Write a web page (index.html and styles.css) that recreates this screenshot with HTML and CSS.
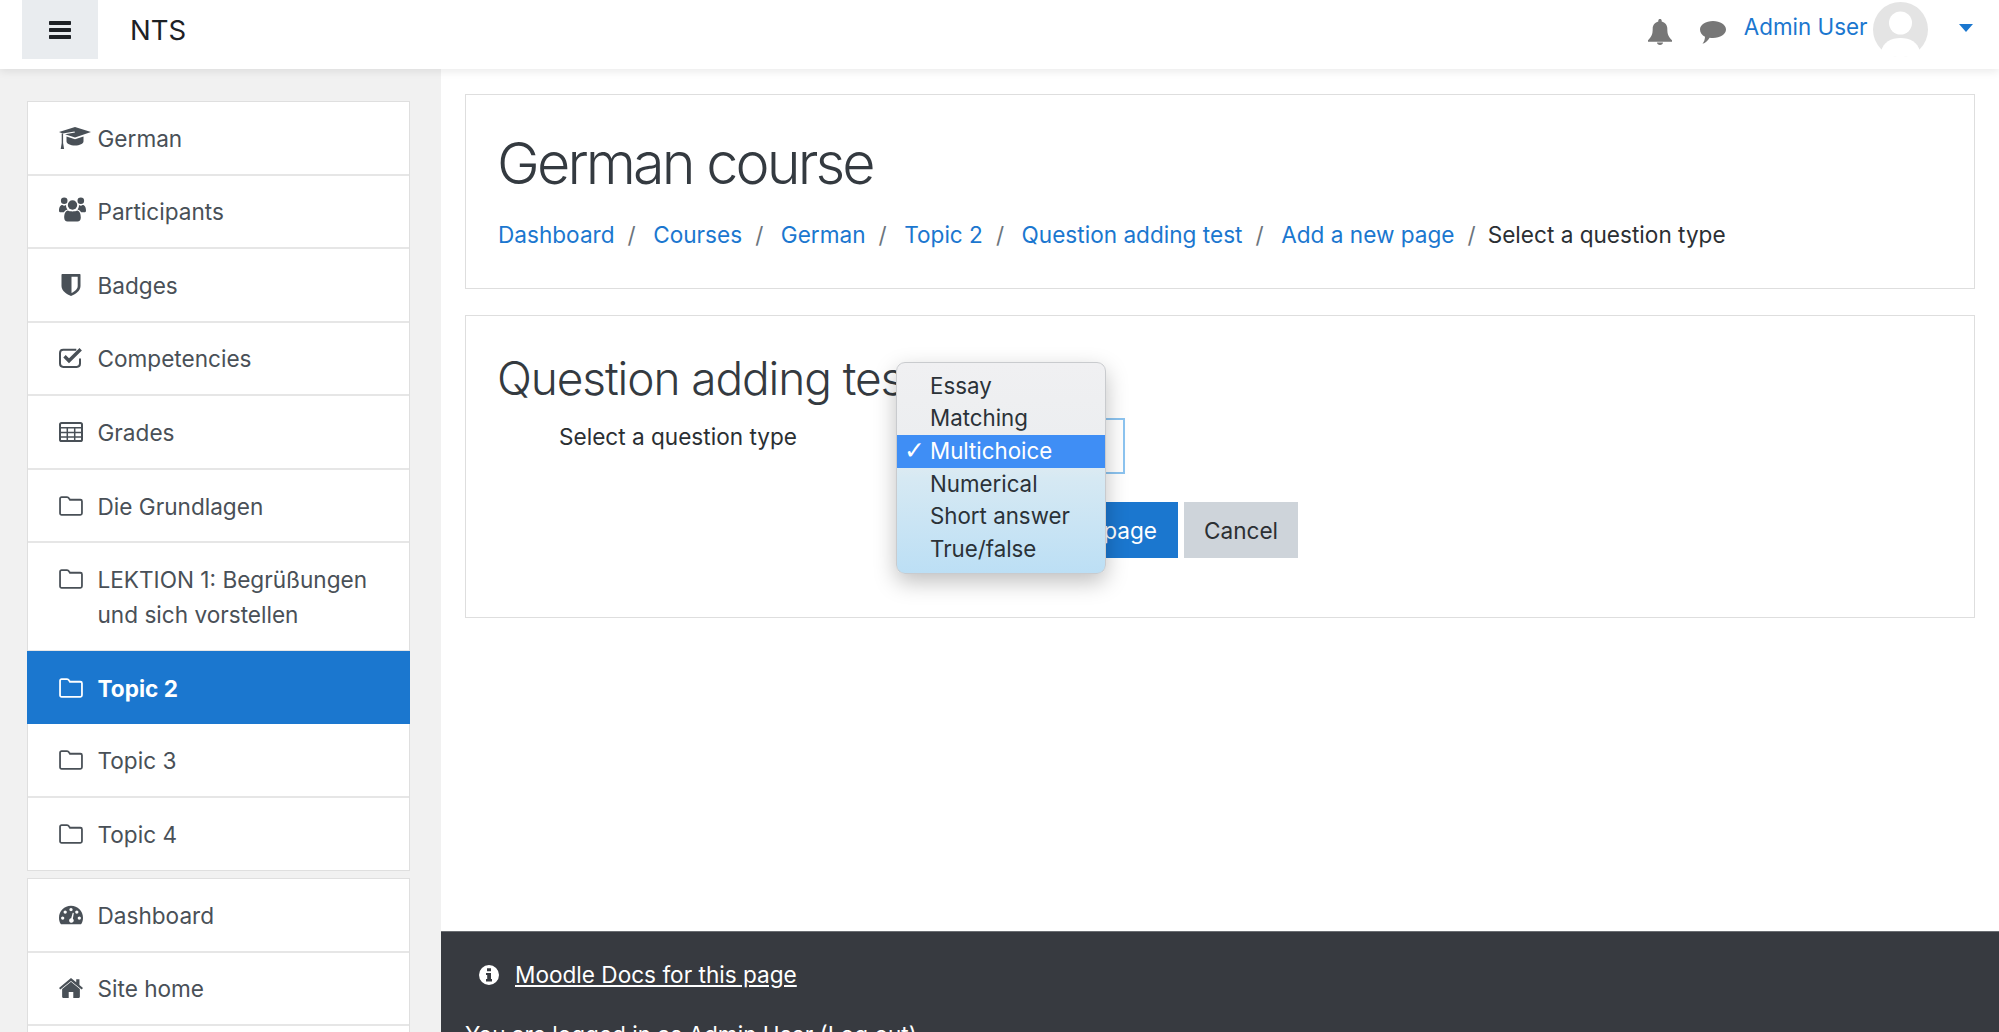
FILE: index.html
```html
<!DOCTYPE html>
<html lang="en">
<head>
<meta charset="utf-8">
<title>German course</title>
<link rel="stylesheet" href="styles.css">
</head>
<body>
<svg class="sprite" aria-hidden="true">
  <symbol id="i-folder" viewBox="0 0 23 19"><path d="M2.500 1h5.200c1 0 1.500.5 2 1.300l.8 1.200H20.500c.9 0 1.500.6 1.500 1.500V16.500c0 .9-.6 1.500-1.500 1.500H2.500C1.600 18 1 17.400 1 16.500V2.500C1 1.600 1.600 1 2.500 1Z" fill="none" stroke="currentColor" stroke-width="1.700"/></symbol>
  <symbol id="i-cap" viewBox="0 0 32 22"><path fill="currentColor" d="M16 0 32 5 16 10.500 6 7.200 16 5.500 15.500 4.500 3.700 6.500 0 5Z"/><path fill="currentColor" d="M7.500 9.500 16 12.300l8.500-2.800v4.700c0 2.500-3.800 4.300-8.500 4.300s-8.500-1.800-8.500-4.300Z"/><path fill="currentColor" d="M2.700 6.500h1.400v9.500l1 6H1.700l1-6Z"/></symbol>
  <symbol id="i-users" viewBox="0 0 27 25"><circle cx="5.200" cy="3.800" r="3.300" fill="currentColor"/><circle cx="21.800" cy="3.800" r="3.300" fill="currentColor"/><circle cx="13.500" cy="8" r="4.700" fill="currentColor"/><path fill="currentColor" d="M7 8c0 2 .7 3.500 1.500 4.500-1.700.5-2.900 1.500-3.700 2.800H1.800C.8 15.300 0 14.800 0 13.400 0 10.700 1 8 3.500 8c.8.7 2 1 3.500 0Zm13 0c1.500 1 2.700.7 3.500 0C26 8 27 10.700 27 13.400c0 1.400-.8 1.900-1.800 1.900h-3c-.8-1.300-2-2.300-3.700-2.800C19.300 11.500 20 10 20 8Z"/><path fill="currentColor" d="M9 13.500c1.500 1.200 7.500 1.200 9 0 2.700.3 3.800 3.500 3.800 7 0 2.500-1.300 4-3.300 4h-10c-2 0-3.300-1.500-3.300-4 0-3.500 1.100-6.700 3.800-7Z"/></symbol>
  <symbol id="i-shield" viewBox="0 0 19 22"><path fill="currentColor" d="M1 0h17c.6 0 1 .4 1 1v11c0 5-5.500 8.300-9.500 10C5.500 20.300 0 17 0 12V1c0-.6.4-1 1-1Z"/><path fill="#fff" d="M10 2.800h6.200V12c0 3.300-3.400 5.700-6.200 7.100Z"/></symbol>
  <symbol id="i-check" viewBox="0 0 24 21"><path fill="none" stroke="currentColor" stroke-width="2" d="M21 11v5c0 2-1.300 3.400-3.300 3.400H4.300C2.300 19.400 1 18 1 16V5.500C1 3.500 2.300 2.200 4.300 2.200h13"/><path fill="none" stroke="currentColor" stroke-width="3.400" d="M5.500 8.800 10 13.300 21.700 1.800"/></symbol>
  <symbol id="i-table" viewBox="0 0 24 20"><rect x="1" y="1" width="22" height="18" rx="1.600" fill="none" stroke="currentColor" stroke-width="2"/><path fill="none" stroke="currentColor" stroke-width="1.500" d="M1 5.800h22M1 10.500h22M1 15h22M8.300 5v14M15.700 5v14"/></symbol>
  <symbol id="i-gauge" viewBox="0 0 26 20"><path fill="currentColor" fill-rule="evenodd" d="M13 0c7.200 0 13 5.800 13 13 0 2.500-.6 4.800-1.700 6.400-.3.400-.8.600-1.300.6H3c-.5 0-1-.2-1.300-.6C.6 17.800 0 15.500 0 13 0 5.800 5.800 0 13 0Zm-9 11.500a1.800 1.800 0 1 0 0 3.600 1.800 1.800 0 0 0 0-3.600Zm18 0a1.800 1.800 0 1 0 0 3.600 1.800 1.800 0 0 0 0-3.600ZM6.700 5a1.800 1.800 0 1 0 0 3.600 1.800 1.800 0 0 0 0-3.600Zm12.600 0a1.800 1.800 0 1 0 0 3.600 1.800 1.800 0 0 0 0-3.600ZM13 2.300a1.800 1.800 0 1 0 0 3.600 1.800 1.800 0 0 0 0-3.600Zm1.700 5.700-1.500 5.500a2.500 2.500 0 1 0 1.800.5l1-5.700c.1-.8-1-1-1.300-.3Z"/></symbol>
  <symbol id="i-home" viewBox="0 0 23 19"><path fill="currentColor" d="M11.500 3.600 20 10.400V18c0 .5-.4 1-1 1h-5.300v-5.700H9.300V19H4c-.6 0-1-.5-1-1v-7.600Z"/><path fill="currentColor" d="M11.500 0 16.500 4.100V1h3.100v5.700L23 9.600 21.700 11l-10.200-8.300L1.300 11 0 9.600Z"/></symbol>
  <symbol id="i-info" viewBox="0 0 20 20"><path fill="currentColor" fill-rule="evenodd" d="M10 0a10 10 0 1 1 0 20 10 10 0 0 1 0-20ZM8 3.200v3h4v-3ZM7 8v2h1.200v4H7v2.500h6V14h-1V8Z"/></symbol>
</svg>

<header class="topbar">
  <button class="toggle" type="button" aria-label="Menu">
    <svg class="toggle-icon" viewBox="0 0 22 18"><path fill="currentColor" d="M1 0h20c.6 0 1 .4 1 1v2c0 .6-.4 1-1 1H1c-.6 0-1-.4-1-1V1c0-.6.400-1 1-1Zm0 7h20c.6 0 1 .4 1 1v2c0 .6-.4 1-1 1H1c-.6 0-1-.4-1-1V8c0-.6.400-1 1-1Zm0 7h20c.6 0 1 .4 1 1v2c0 .6-.4 1-1 1H1c-.6 0-1-.4-1-1v-2c0-.6.400-1 1-1Z"/></svg>
  </button>
  <span class="brand">NTS</span>
  <div class="usernav">
    <svg class="bell" viewBox="0 0 24 26"><path fill="currentColor" d="M12 0c1 0 1.700.7 1.700 1.700v.7C17 3.200 19.300 6 19.300 9.500c0 6 1.200 8.300 4.700 11.800v1.400H0v-1.400C3.500 17.800 4.700 15.500 4.700 9.500c0-3.500 2.300-6.300 5.600-7.100v-.7C10.300.7 11 0 12 0Zm-3 23.500h6c0 1.500-1.300 2.500-3 2.500s-3-1-3-2.500Z"/></svg>
    <svg class="chat" viewBox="0 0 26 23"><path fill="currentColor" d="M13 0c7.200 0 13 3.700 13 8.500S20.200 17 13 17c-1.200 0-2.300-.1-3.400-.3C8 19.500 5.500 22 2.500 22.800c1.500-2 2.400-4 2.500-7C2 14.200 0 11.500 0 8.500 0 3.700 5.800 0 13 0Z"/></svg>
    <a class="username" href="#">Admin User</a>
    <svg class="avatar" viewBox="0 0 55 55"><circle cx="27.500" cy="27.500" r="27.500" fill="#e4e4e4"/><circle cx="27.500" cy="21" r="11.500" fill="#fff"/><path fill="#fff" d="M8 50c2-10 10-14 19.500-14S45 40 47 50c-5 3-12 5-19.500 5S13 53 8 50Z"/></svg>
    <span class="caret"></span>
  </div>
</header>

<div class="page">
  <aside class="sidebar">
    <nav class="menu">
      <a class="item" href="#"><svg class="ico ico-cap"><use href="#i-cap"/></svg><span>German</span></a>
      <a class="item" href="#"><svg class="ico ico-users"><use href="#i-users"/></svg><span>Participants</span></a>
      <a class="item" href="#"><svg class="ico"><use href="#i-shield"/></svg><span>Badges</span></a>
      <a class="item" href="#"><svg class="ico"><use href="#i-check"/></svg><span>Competencies</span></a>
      <a class="item" href="#"><svg class="ico"><use href="#i-table"/></svg><span>Grades</span></a>
      <a class="item" href="#"><svg class="ico"><use href="#i-folder"/></svg><span>Die Grundlagen</span></a>
      <a class="item" href="#"><svg class="ico"><use href="#i-folder"/></svg><span>LEKTION 1: Begrüßungen und sich vorstellen</span></a>
      <a class="item active" href="#"><svg class="ico"><use href="#i-folder"/></svg><span>Topic 2</span></a>
      <a class="item" href="#"><svg class="ico"><use href="#i-folder"/></svg><span>Topic 3</span></a>
      <a class="item" href="#"><svg class="ico"><use href="#i-folder"/></svg><span>Topic 4</span></a>
    </nav>
    <nav class="menu">
      <a class="item" href="#"><svg class="ico"><use href="#i-gauge"/></svg><span>Dashboard</span></a>
      <a class="item" href="#"><svg class="ico"><use href="#i-home"/></svg><span>Site home</span></a>
      <a class="item" href="#"><svg class="ico"><use href="#i-folder"/></svg><span>My courses</span></a>
    </nav>
  </aside>

  <div class="main">
    <div class="content">
      <section class="card head-card">
        <h1 class="title">German course</h1>
        <ol class="crumbs">
          <li><a href="#">Dashboard</a></li>
          <li><a href="#">Courses</a></li>
          <li><a href="#">German</a></li>
          <li><a href="#">Topic 2</a></li>
          <li><a href="#">Question adding test</a></li>
          <li><a href="#">Add a new page</a></li>
          <li class="current">Select a question type</li>
        </ol>
      </section>
      <section class="card form-card">
        <h2 class="subtitle">Question adding test</h2>
        <div class="form-row">
          <label class="form-label">Select a question type</label>
          <div class="select-box"></div>
        </div>
        <div class="actions">
          <button class="btn btn-primary" type="button">Add to page</button>
          <button class="btn btn-secondary" type="button">Cancel</button>
        </div>
        <ul class="dropdown">
          <li>Essay</li>
          <li>Matching</li>
          <li class="selected">Multichoice</li>
          <li>Numerical</li>
          <li>Short answer</li>
          <li>True/false</li>
        </ul>
      </section>
    </div>
    <footer class="footer">
      <p class="docs"><svg class="info"><use href="#i-info"/></svg><a href="#">Moodle Docs for this page</a></p>
      <p class="login">You are logged in as Admin User (Log out)</p>
    </footer>
  </div>
</div>
</body>
</html>
```
FILE: styles.css
```css
* { box-sizing: border-box; }
html, body { margin: 0; height: 1032px; overflow: hidden; }
body { font-family: Inter, "Liberation Sans", sans-serif; font-size: 22.600px; line-height: 34.500px; color: #2b2f33; background: #fff; display: flex; flex-direction: column; }
a { color: inherit; text-decoration: none; }
.sprite { display: none; }

.topbar { height: 69px; flex: none; display: flex; align-items: flex-start; background: #fff; box-shadow: 0 3px 8px rgba(0,0,0,.08); position: relative; z-index: 2; padding-left: 22px; }
.toggle { width: 76px; height: 59px; border: 0; background: #e9ecef; padding: 0; color: #1d2125; display: flex; align-items: center; justify-content: center; }
.toggle-icon { width: 22px; height: 18px; }
.brand { margin-left: 32px; font-size: 27.500px; line-height: 60px; color: #1d2125; }
.usernav { margin-left: auto; display: flex; align-items: center; height: 59px; padding-right: 26px; color: #777; }
.bell { width: 24px; height: 26px; margin-top: 4px; }
.chat { width: 26px; height: 23px; margin-left: 28px; margin-top: 6px; }
.username { margin-left: 18px; margin-bottom: 5px; color: #1b77cf; font-size: 22.400px; }
.avatar { width: 55px; height: 55px; margin-left: 5.500px; }
.caret { width: 0; height: 0; margin-left: 31px; margin-top: -3px; border-left: 7px solid transparent; border-right: 7px solid transparent; border-top: 8px solid #1b77cf; }

.page { flex: 1; display: flex; min-height: 0; }
.sidebar { width: 441px; flex: none; background: #f1f1f1; padding: 32px 31px 0 27px; overflow: hidden; }
.menu { background: #fff; border: 1px solid #dfdfdf; margin-bottom: 7.500px; }
.item { display: flex; align-items: flex-start; padding: 19.700px 30px 17.400px 31px; border-bottom: 2px solid #e6e6e6; color: #495057; }
.item:last-child { border-bottom: 0; }
.item.active { background: #1b77cf; color: #fff; font-weight: 700; margin: -1px -1px 0; padding-top: 21px; padding-bottom: 17.500px; padding-left: 32px; border-bottom: 0; }
.item.active + .item { padding-top: 20.700px; }
.ico { width: 24px; height: 22px; margin: 5px 14.500px 0 0; flex: none; overflow: visible; }
.ico-cap { width: 32px; margin-right: 6.500px; margin-left: 0; }
.ico-users { width: 27px; height: 25px; margin-top: 2px; margin-right: 11.500px; margin-left: 0; }

.main { flex: 1; min-width: 0; display: flex; flex-direction: column; }
.content { flex: 1; padding: 25px 24px 0; }
.card { border: 1px solid #dedede; background: #fff; }
.head-card { height: 195px; padding: 34px 32px 0; }
.title { margin: 0 0 0 -1px; font-weight: 300; font-size: 57.500px; line-height: 69px; color: #343a40; letter-spacing: -2.850px; }
.crumbs { list-style: none; margin: 20px 0 0; padding: 0; display: flex; }
.crumbs a { color: #1b77cf; }
.crumbs li + li::before { content: "/"; color: #6c757d; padding: 0 17.500px 0 13px; }
.crumbs li.current::before { padding-right: 12px; }
.form-card { position: relative; height: 303px; margin-top: 26px; padding: 35px 32px 0; }
.subtitle { margin: 0 0 0 -1px; font-weight: 300; font-size: 46px; line-height: 55px; color: #343a40; letter-spacing: -1.100px; }
.form-row { display: flex; margin-top: 12px; padding-left: 61px; }
.form-label { width: 361px; line-height: 37.500px; }
.select-box { width: 205px; height: 56px; border: 2px solid #8cc4f0; }
.actions { display: flex; justify-content: flex-end; gap: 6px; margin: 28px 0 0; padding-right: 644px; }
.btn { height: 56px; border: 0; font: inherit; padding: 2px 21px 0; }
.btn-primary { width: 214px; background: #1b77cf; color: #fff; text-align: right; }
.btn-secondary { width: 114px; background: #ced4da; color: #2b2f33; padding: 2px 0 0; }
.dropdown { position: absolute; left: 430px; top: 46px; width: 210px; height: 212px; margin: 0; padding: 6.500px 0; list-style: none; border: 1px solid #c9cbce; border-radius: 9px; background: linear-gradient(#f0f0f2 0%, #eceef0 35%, #d6e9f3 55%, #bcdff5 100%); box-shadow: 0 8px 22px rgba(0,0,0,.25); font-size: 22.300px; line-height: 32.700px; color: #2b3238; }
.dropdown li { padding-left: 33px; position: relative; }
.dropdown .selected { background: #3f8ef5; color: #fff; }
.dropdown .selected::before { content: "✓"; position: absolute; left: 7px; font-size: 25px; font-family: "DejaVu Sans", sans-serif; }

.footer { height: 101px; flex: none; background: #373a40; color: #fff; padding: 26px 24px 0; overflow: hidden; border-top: 1px solid #6a6d72; }
.docs, .login { margin: 0; }
.docs { padding-left: 14px; display: flex; align-items: center; }
.docs a { text-decoration: underline; }
.info { width: 20px; height: 20px; margin-right: 16px; }
.login { margin-top: 25px; }
```
